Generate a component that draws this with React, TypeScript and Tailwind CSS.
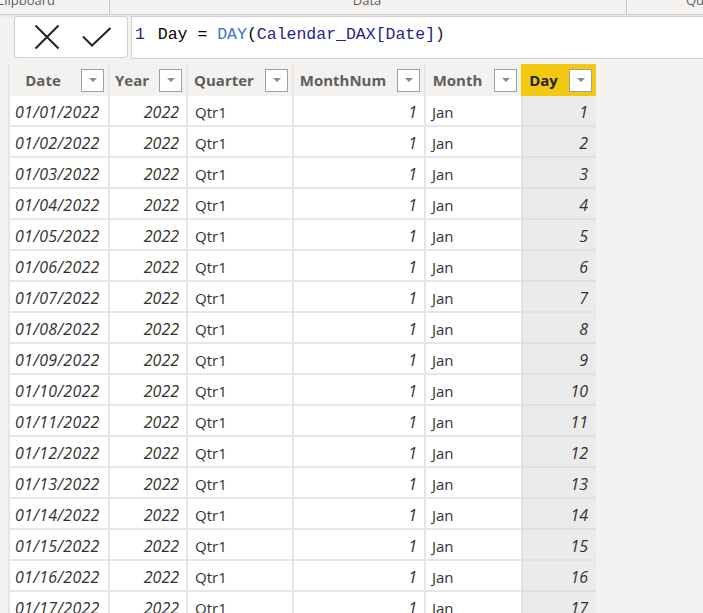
import React from "react"

const rows = Array.from({ length: 17 }, (_, i) => i + 1)

function FilterBox() {
    return (
        <div className="flex h-[23px] w-[23px] shrink-0 items-start justify-center border border-[#a19f9d] bg-white pt-[8px]">
            <div className="h-0 w-0 border-x-[4px] border-t-[4px] border-x-transparent border-t-[#8a8886]" />
        </div>
    )
}

function HeaderCell({ label, width, active }: { label: string; width: string; active?: boolean }) {
    return (
        <div
            className={`flex h-[32px] items-center border-l-2 pr-[4px] ${width} ${
                active ? "border-[#f2c811] bg-[#f2c811] text-[#252423]" : "border-[#e6e6e6] bg-[#f3f2f1] text-[#605e5c]"
            }`}
        >
            <span className="flex-1 pr-[5px] text-center text-[15px] font-bold">{label}</span>
            <FilterBox />
        </div>
    )
}

export default function App() {
    return (
        <div className="h-[613px] w-[703px] overflow-hidden bg-[#f3f2f1] font-['Open_Sans',sans-serif]">
            {/* ribbon remnant */}
            <div className="flex h-[15px] overflow-hidden border-b border-[#d2d0ce] bg-[#f3f2f1] text-[13px] text-[#605e5c] shadow-[0_1px_3px_rgba(0,0,0,0.08)]">
                <div className="w-[110px] shrink-0 border-r border-[#c8c6c4]">
                    <div className="-ml-[4px] -mt-[9px]">Clipboard</div>
                </div>
                <div className="w-[517px] shrink-0 border-r border-[#c8c6c4] text-center">
                    <div className="-mt-[9px] pr-[2px]">Data</div>
                </div>
                <div className="pl-[59px]">
                    <div className="-mt-[9px] whitespace-nowrap">Queries</div>
                </div>
            </div>

            {/* formula bar */}
            <div className="flex gap-[3px] pl-[14px] pt-[1px]">
                <div className="flex h-[42px] w-[114px] shrink-0 items-center rounded-[3px] border border-[#d2d0ce] bg-white">
                    <svg className="ml-[19px]" width="26" height="26" viewBox="0 0 26 26">
                        <path d="M1.5 1.5 L24.5 24.5 M24.5 1.5 L1.5 24.5" stroke="#252423" strokeWidth="2" fill="none" />
                    </svg>
                    <svg className="ml-[22px]" width="30" height="20" viewBox="0 0 30 20">
                        <path d="M1 9.5 L10 18.5 L28.5 1" stroke="#252423" strokeWidth="2" fill="none" />
                    </svg>
                </div>
                <div className="flex h-[43px] flex-1 items-center border border-r-0 border-[#d2d0ce] bg-white pl-[3px] pb-[4px] font-['Liberation_Mono',monospace] text-[16.5px] whitespace-pre">
                    <span className="mr-[3px] text-[#1e1e8c]">1</span>
                    <span className="text-black">{" Day = "}</span>
                    <span className="text-[#3b6fd6]">DAY</span>
                    <span className="text-black">(</span>
                    <span className="text-[#1e1e8c]">Calendar_DAX[Date]</span>
                    <span className="text-[#3a0d0d]">)</span>
                </div>
            </div>

            {/* table */}
            <div className="pl-[8px] pt-[5px]">
                <div className="flex">
                    <HeaderCell label="Date" width="w-[100px]" />
                    <HeaderCell label="Year" width="w-[78px]" />
                    <HeaderCell label="Quarter" width="w-[106px]" />
                    <HeaderCell label="MonthNum" width="w-[132px]" />
                    <HeaderCell label="Month" width="w-[97px]" />
                    <HeaderCell label="Day" width="w-[75px]" active />
                </div>
                {rows.map((d) => {
                    const dd = String(d).padStart(2, "0")
                    return (
                        <div key={d} className="flex text-[15px] text-[#323130]">
                            <div className="flex h-[31px] w-[100px] items-center border-b-2 border-l-2 border-[#e6e6e6] bg-white pl-[5px] pt-[3px] text-[16px] tracking-[0.3px] italic">
                                01/{dd}/2022
                            </div>
                            <div className="flex h-[31px] w-[78px] items-center justify-end border-b-2 border-l-2 border-[#e6e6e6] bg-white pr-[7px] pt-[3px] text-[16px] italic">
                                2022
                            </div>
                            <div className="flex h-[31px] w-[106px] items-center border-b-2 border-l-2 border-[#e6e6e6] bg-white pl-[7px] pt-[3px]">
                                Qtr1
                            </div>
                            <div className="flex h-[31px] w-[132px] items-center justify-end border-b-2 border-l-2 border-[#e6e6e6] bg-white pr-[7px] pt-[3px] text-[16px] italic">
                                1
                            </div>
                            <div className="flex h-[31px] w-[97px] items-center border-b-2 border-l-2 border-[#e6e6e6] bg-white pl-[6px] pt-[3px]">
                                Jan
                            </div>
                            <div className="flex h-[31px] w-[75px] items-center justify-end border-b-2 border-l-2 border-[#e1e1e1] bg-[#ebebeb] pr-[8px] pt-[3px] text-[16px] italic">
                                {d}
                            </div>
                        </div>
                    )
                })}
            </div>
        </div>
    )
}
